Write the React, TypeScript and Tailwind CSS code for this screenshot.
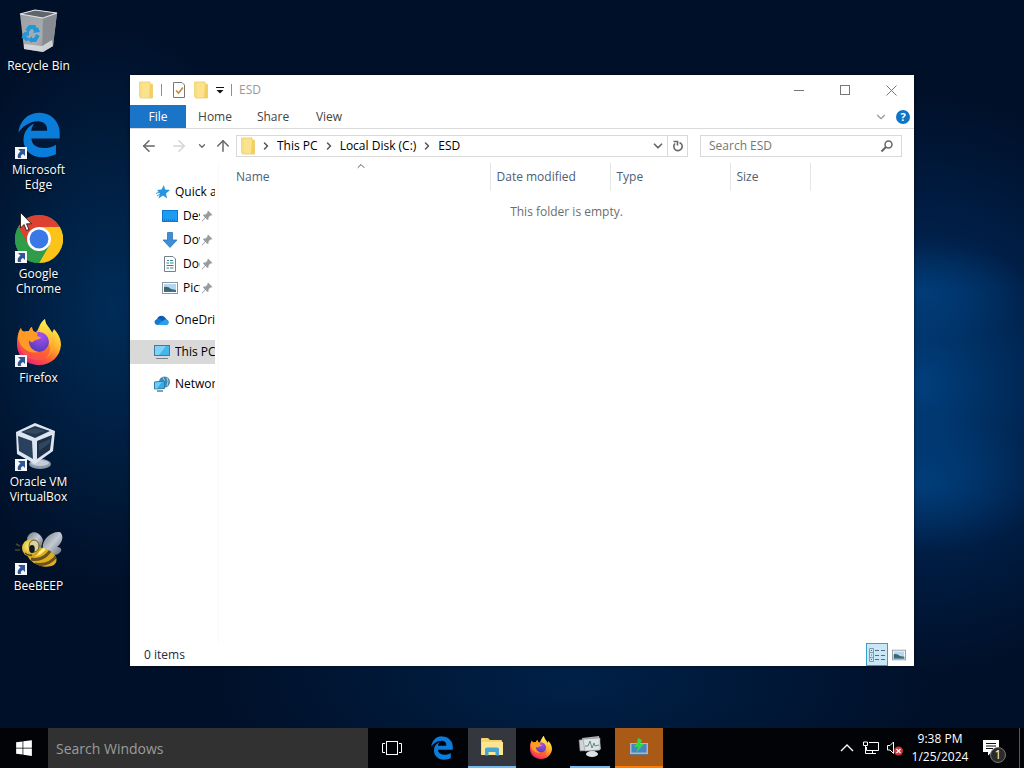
import React from "react";
import { FaEdgeLegacy, FaWindows } from "react-icons/fa6";
import {
  ArrowLeft,
  ArrowRight,
  ArrowUp,
  ChevronDown,
  ChevronRight,
  ChevronUp,
} from "lucide-react";

type IconProps = { className?: string };

function RecycleBinIcon({ className }: IconProps) {
  return (
    <svg viewBox="0 0 48 48" className={className} aria-hidden="true">
      <defs>
        <linearGradient id="binSide" x1="0" y1="0" x2="1" y2="1">
          <stop offset="0" stopColor="#9aa0a6" />
          <stop offset="0.6" stopColor="#a9adb1" />
          <stop offset="1" stopColor="#7f858b" />
        </linearGradient>
      </defs>
      <path d="M5 7 L20 3 L42 6 L38 39 L28 45 L9 42 Z" fill="url(#binSide)" />
      <path d="M28 11 L42 6 L38 39 L27 45 Z" fill="#878c92" />
      <path d="M5 7 L20 3 L42 6 L28 11 Z" fill="#5f656b" stroke="#e3e6e8" strokeWidth="1.2" />
      <path d="M9 37 L27 39 L37 33 L38 39 L28 45 L9 42 Z" fill="#dfe1e3" opacity="0.8" />
      <g fill="none" stroke="#2196d8" strokeWidth="4">
        <path d="M12 24 L15 20 L19 20 L21 24" />
        <path d="M23 28 L20 33 L16 33" />
        <path d="M13 33 L9 30 L11 26" />
      </g>
      <path d="M18 26 L25 25 L23 20 Z M17 29 L17 36 L13 33 Z M8 27 L14 23 L14 29 Z" fill="#2196d8" />
    </svg>
  );
}

function ChromeIcon({ className }: IconProps) {
  return (
    <svg viewBox="0 0 48 48" className={className} aria-hidden="true">
      <circle cx="24" cy="24" r="24" fill="#2e9c48" />
      <path d="M3.2 12 A24 24 0 0 1 44.8 12 L24 12 L13.6 30 Z" fill="#dd4132" />
      <path d="M44.8 12 A24 24 0 0 1 24 48 L34.4 30 L24 12 Z" fill="#fcc419" />
      <path d="M3.2 12 A24 24 0 0 0 24 48 L34.4 30 L13.6 30 Z" fill="#2e9c48" />
      <circle cx="24" cy="24" r="12" fill="#fff" />
      <circle cx="24" cy="24" r="9.4" fill="#3b78e7" />
    </svg>
  );
}

function FirefoxIcon({ className }: IconProps) {
  return (
    <svg viewBox="0 0 48 48" className={className} aria-hidden="true">
      <defs>
        <linearGradient id="foxBody" x1="0.85" y1="0.1" x2="0.2" y2="0.95">
          <stop offset="0" stopColor="#fff04a" />
          <stop offset="0.35" stopColor="#ffb52e" />
          <stop offset="0.65" stopColor="#ff5a36" />
          <stop offset="1" stopColor="#e8207a" />
        </linearGradient>
        <linearGradient id="foxTail" x1="0.5" y1="0" x2="0.5" y2="1">
          <stop offset="0" stopColor="#fff24f" />
          <stop offset="1" stopColor="#ff8d1e" />
        </linearGradient>
        <radialGradient id="foxGlobe" cx="0.6" cy="0.2" r="0.9">
          <stop offset="0" stopColor="#a84ef0" />
          <stop offset="1" stopColor="#4a3bb5" />
        </radialGradient>
      </defs>
      <path
        d="M6 9 C6 11 7 13 8 14 C10 12 12 12 14 12 C15 10 15 9 17 8 C17 11 19 13 21 13 C24 11 24 4 30 0 C30 6 35 8 37 14 L39 10 C44 15 46 21 46 26 C45 38 36 46 24 46 C11 46 2 37 2 25 C2 18 3 13 6 9 Z"
        fill="url(#foxBody)"
      />
      <path d="M30 0 C30 8 37 10 39 18 C42 28 37 36 31 39 C38 32 35 20 28 16 C22 13 25 4 30 0 Z" fill="url(#foxTail)" />
      <circle cx="24" cy="23" r="10" fill="url(#foxGlobe)" />
      <path
        d="M6 9 C7 13 9 13 14 12 C15 10 15 9 17 8 C17 12 20 14 23 14 C21 16 23 18 26 18 C25 21 20 20 18 23 C15 24 14 21 14 21 C13 28 18 32 24 33 C15 36 6 30 3 20 C3 15 4 12 6 9 Z"
        fill="#ff9b25"
      />
      <path d="M3 20 C6 31 16 36 24 33 C31 33 34 29 34 25 C37 33 32 41 24 41 C13 42 4 34 3 20 Z" fill="#ff5a3c" opacity="0.65" />
    </svg>
  );
}

function VirtualBoxIcon({ className }: IconProps) {
  return (
    <svg viewBox="0 0 48 48" className={className} aria-hidden="true">
      <ellipse cx="25" cy="41" rx="11" ry="5" fill="#8d98ab" />
      <ellipse cx="25" cy="40" rx="9" ry="3" fill="#c4ccd8" />
      <path d="M1 9 L20 0 L40 8 L38 28 L20 41 L2 31 Z" fill="#dde5f1" />
      <path d="M6 9 L20 3 L35 8 L20 15 Z" fill="#20364f" />
      <path d="M3 13 L17 18 L18 36 L4 28 Z" fill="#2a415d" />
      <path d="M22 18 L37 12 L35 27 L22 36 Z" fill="#1c3049" />
      <path d="M8 9 L20 5 L30 8 L20 11 Z" fill="#33495f" />
      <path d="M24 21 L35 16 L35 20 L24 28 Z" fill="#31475f" />
    </svg>
  );
}

function BeeIcon({ className }: IconProps) {
  return (
    <svg viewBox="0 0 48 48" className={className} aria-hidden="true">
      <defs>
        <linearGradient id="beeWing" x1="0" y1="0" x2="1" y2="1">
          <stop offset="0" stopColor="#6f7680" />
          <stop offset="0.5" stopColor="#c3cad2" />
          <stop offset="1" stopColor="#646c77" />
        </linearGradient>
        <radialGradient id="beeHead" cx="0.4" cy="0.4" r="0.7">
          <stop offset="0" stopColor="#fff27a" />
          <stop offset="1" stopColor="#c08f06" />
        </radialGradient>
        <clipPath id="beeBody">
          <ellipse cx="27" cy="30" rx="15" ry="9" transform="rotate(18 27 30)" />
        </clipPath>
      </defs>
      <path d="M12 12 C14 3 24 3 28 13 L26 21 L16 17 Z" fill="url(#beeWing)" />
      <path d="M28 22 C26 15 34 4 45 5 C49 9 48 15 42 20 C48 20 48 26 40 28 Z" fill="url(#beeWing)" />
      <g clipPath="url(#beeBody)">
        <rect x="8" y="14" width="38" height="32" fill="#dcb01c" />
        <path d="M16 32 Q30 35 38 19 M20 37 Q34 40 43 27" fill="none" stroke="#6b5020" strokeWidth="3" />
        <path d="M14 27 Q25 30 31 19" fill="none" stroke="#fff08a" strokeWidth="3" />
      </g>
      <circle cx="16" cy="21" r="9" fill="url(#beeHead)" />
      <ellipse cx="19" cy="19" rx="5" ry="6" fill="#d6d2a4" stroke="#665a1e" />
      <ellipse cx="17" cy="22" rx="2.800" ry="4" fill="#14171a" />
      <path d="M1 17 L5 19 M0 23 L5 23 M10 26 Q13 29 17 28" fill="none" stroke="#4a4630" strokeWidth="1.400" />
    </svg>
  );
}

function ShortcutArrow() {
  return (
    <svg viewBox="0 0 12 12" className="absolute bottom-0 left-0 h-3 w-3" aria-hidden="true">
      <rect width="12" height="12" fill="#f4f6f9" />
      <path d="M3 2 H10 V9 L8 7 C6 8 5.500 9.500 6 11 H3 C2 8 3.500 6 5.500 4.500 Z" fill="#2f5596" />
    </svg>
  );
}

function FolderIcon({ className }: IconProps) {
  return (
    <svg viewBox="0 0 16 18" className={className} aria-hidden="true">
      <path d="M1.500 1 H12 V3 L14.500 3.500 V17 H2.500 L1.500 15 Z" fill="#fbe38d" stroke="#e9cb6b" strokeWidth="0.800" />
      <path d="M12 3 L14.500 3.500 V17 H11 Z" fill="#f2cf62" />
      <path d="M1.500 1 L4 2 V17 L1.500 15 Z" fill="#f8dd82" />
    </svg>
  );
}

function StarIcon() {
  return (
    <svg viewBox="0 0 16 16" className="h-4 w-4" aria-hidden="true">
      <path d="M10 1 L11 5.500 L16 6 L12 9.500 L13 14.500 L9 11.500 L4.500 14.500 L6 9.500 L3 6 L7.500 5.500 Z" fill="#2795dd" />
      <path d="M2 9.500 L6 8 M3 12 L6 10" stroke="#2795dd" />
    </svg>
  );
}

function DesktopFolderIcon() {
  return (
    <svg viewBox="0 0 16 16" className="h-4 w-4" aria-hidden="true">
      <rect x="0.500" y="2.500" width="15" height="11" fill="#1e9bf5" stroke="#1277cc" />
      <path d="M2 12 H14" stroke="#0a5ea8" strokeDasharray="1 1" />
    </svg>
  );
}

function DownloadsIcon() {
  return (
    <svg viewBox="0 0 16 16" className="h-4 w-4" aria-hidden="true">
      <path d="M5.500 0.500 H10.500 V8 H15 L8 15.500 L1 8 H5.500 Z" fill="#3b8fd9" stroke="#2d74b8" strokeWidth="0.800" />
    </svg>
  );
}

function DocumentsIcon() {
  return (
    <svg viewBox="0 0 16 16" className="h-4 w-4" aria-hidden="true">
      <path d="M2.500 0.500 H11 L13.500 3 V15.500 H2.500 Z" fill="#fff" stroke="#75828c" />
      <path d="M5 4.500 H7 M8 4.500 H11 M4.500 7 H7 M8 7 H11.500 M4.500 9.500 H11.500 M4.500 12 H7 M8 12 H11.500" stroke="#2c8794" strokeWidth="1.200" />
    </svg>
  );
}

function PictureIcon({ className }: IconProps) {
  return (
    <svg viewBox="0 0 16 16" className={className} aria-hidden="true">
      <rect x="0.500" y="2.500" width="15" height="11" fill="#fff" stroke="#8c969e" />
      <rect x="2" y="4" width="12" height="8" fill="#b5d6f1" />
      <path d="M2 7 Q6 6 9 9 L14 10 V12 H2 Z" fill="#3c6568" />
      <path d="M2 10.500 H14 V12 H2 Z" fill="#3673a8" />
    </svg>
  );
}

function OneDriveIcon() {
  return (
    <svg viewBox="0 0 16 16" className="h-4 w-4" aria-hidden="true">
      <path d="M3 8 A4.500 4.500 0 0 1 11 5.500 L14 9 L8 12 L2 10 Z" fill="#0a5cb0" />
      <path d="M3 13 A3 3 0 0 1 2.500 7.200 Q5 6 7.500 8 L13 13 Z" fill="#1479cf" />
      <path d="M3 13 L10 8 Q11 6.800 12.500 7.500 A2.900 2.900 0 0 1 13.200 13 Z" fill="#2aa0ea" />
    </svg>
  );
}

function ThisPCIcon() {
  return (
    <svg viewBox="0 0 16 16" className="h-4 w-4" aria-hidden="true">
      <rect x="0.500" y="1.500" width="15" height="10" fill="#46b5ea" stroke="#3d7ba3" />
      <path d="M1 2 H12 L5 11 H1 Z" fill="#7fd2f6" />
      <path d="M2 14.500 H14" stroke="#75838d" />
    </svg>
  );
}

function NetworkIcon() {
  return (
    <svg viewBox="0 0 16 16" className="h-4 w-4" aria-hidden="true">
      <circle cx="10.500" cy="6" r="5.500" fill="#4288b5" />
      <path d="M9 1.500 Q12 4 9 8 M13 2 Q15 5 13 10" stroke="#a6d3ea" fill="none" />
      <path d="M0.500 6 L10.500 5 V12.500 L0.500 13 Z" fill="#38ace2" stroke="#2a7cae" />
      <path d="M1 6.500 L8 6 L3 12.500 H1 Z" fill="#73cdf2" />
      <path d="M3 15 H9" stroke="#5c7f94" strokeWidth="1.500" />
    </svg>
  );
}

function PinIcon() {
  return (
    <svg viewBox="0 0 12 12" className="h-3 w-3 shrink-0" aria-hidden="true">
      <path d="M7 0.500 L11.500 5 L10.500 5.500 L9.500 5.500 L7.500 7.500 L7.500 9.500 L6.500 10 L4.500 8 L1 11.500 L0.500 11 L4 7.500 L2 5.500 L2.500 4.500 L4.500 4.500 L6.500 2.500 L6.500 1.500 Z" fill="#979ca1" />
    </svg>
  );
}

function RefreshIcon() {
  return (
    <svg viewBox="0 0 12 12" className="h-3 w-3" fill="none" stroke="currentColor" aria-hidden="true">
      <path d="M7.500 2.500 A4.200 4.200 0 1 1 3 3.500" strokeWidth="1.600" />
      <path d="M1.500 1.500 H5.500 V5.500" strokeWidth="1.600" />
    </svg>
  );
}

function TaskViewIcon() {
  return (
    <svg viewBox="0 0 20 14" className="h-[14px] w-5" fill="none" stroke="#fff" aria-hidden="true">
      <rect x="4.500" y="0.500" width="11" height="13" />
      <path d="M3 2.500 H0.500 V11.500 H3 M17 2.500 H19.500 V11.500 H17" />
    </svg>
  );
}

function ExplorerIcon() {
  return (
    <svg viewBox="0 0 22 18" className="h-[18px] w-[22px]" aria-hidden="true">
      <path d="M0 1 Q0 0 1 0 H7 L9 2 H20 Q21 2 21 3 V17 H0 Z" fill="#f5d46c" />
      <path d="M1 4 H22 V17 H1 Z" fill="#fde691" />
      <path d="M4 17.500 V11.500 Q4 9.500 6 9.500 H16 Q18 9.500 18 11.500 V17.500 H14.500 V14 H7.500 V17.500 Z" fill="#43a5d8" />
    </svg>
  );
}

function MonitorIcon() {
  return (
    <svg viewBox="0 0 24 22" className="h-[22px] w-6" aria-hidden="true">
      <path d="M4 2 L21 0 L23 13 L5 15 Z" fill="#aeb2b4" />
      <path d="M1 4 L19 2 L21 14 L2 15 Z" fill="#d2d5d6" stroke="#74797c" strokeWidth="0.600" />
      <path d="M5 3 L22 2 L22 14 L7 15 Z" fill="#dfe3e3" stroke="#92979a" strokeWidth="0.600" />
      <path d="M7 10 L10 10 L12 5 L14 12 L16 7 L17 10 L21 9" fill="none" stroke="#5d8b90" />
      <path d="M12 15 L17 15 L18 18 L11 18 Z" fill="#a4a8aa" />
      <ellipse cx="14" cy="18" rx="6" ry="3" fill="#dfe2e3" />
    </svg>
  );
}

function InstallerIcon() {
  return (
    <svg viewBox="0 0 20 18" className="h-[18px] w-5" aria-hidden="true">
      <rect x="1" y="5" width="18" height="11" fill="#a9b7c6" />
      <rect x="2.500" y="6" width="15" height="8.500" fill="#4784c6" />
      <path d="M9 0 L13 2 L11 6 H15 L7 15 L9 9 H5 L8 5 Z" fill="#35d646" />
      <path d="M1 16 H19 V17 H1 Z" fill="#697887" />
    </svg>
  );
}

function NetworkTrayIcon() {
  return (
    <svg viewBox="0 0 18 14" className="h-[14px] w-[18px]" fill="none" stroke="#fff" aria-hidden="true">
      <path d="M7 1.500 H16.500 V9.500 H4.500 V6 M10.500 9.500 V12.500 M7 12.500 H14" />
      <path d="M1.500 1 V4.500 H5.500 V1 Z M3.500 4.500 V12.500 H7" />
    </svg>
  );
}

function SoundMutedIcon() {
  return (
    <svg viewBox="0 0 18 16" className="h-4 w-[18px]" aria-hidden="true">
      <path d="M1.500 5.500 H4 L7.500 2 V13.500 L4 10 H1.500 Z" fill="none" stroke="#fff" />
      <circle cx="12.500" cy="11" r="4.500" fill="#cf3338" />
      <path d="M10.500 9 L14.500 13 M14.500 9 L10.500 13" stroke="#fff" strokeWidth="1.200" />
    </svg>
  );
}

function NotificationIcon() {
  return (
    <svg viewBox="0 0 16 16" className="h-4 w-4" aria-hidden="true">
      <path d="M0 0 H16 V12 H9 L5 15.500 V12 H0 Z" fill="#fff" />
      <path d="M3 3.500 H13 M3 6 H13 M3 8.500 H10" stroke="#111" />
    </svg>
  );
}

const shortcuts = [
  { name: "Recycle Bin", icon: <RecycleBinIcon className="h-12 w-12" />, linked: false },
  { name: "Microsoft Edge", icon: <FaEdgeLegacy className="h-[46px] w-[46px] text-[#0a7ddb]" />, linked: true },
  { name: "Google Chrome", icon: <ChromeIcon className="h-12 w-12" />, linked: true },
  { name: "Firefox", icon: <FirefoxIcon className="h-12 w-12" />, linked: true },
  { name: "Oracle VM VirtualBox", icon: <VirtualBoxIcon className="h-12 w-12" />, linked: true },
  { name: "BeeBEEP", icon: <BeeIcon className="h-12 w-12" />, linked: true },
];

const quickAccess = [
  { name: "Desktop", icon: <DesktopFolderIcon /> },
  { name: "Downloads", icon: <DownloadsIcon /> },
  { name: "Documents", icon: <DocumentsIcon /> },
  { name: "Pictures", icon: <PictureIcon className="h-4 w-4" /> },
];

const places = [
  { name: "OneDrive", icon: <OneDriveIcon />, selected: false },
  { name: "This PC", icon: <ThisPCIcon />, selected: true },
  { name: "Network", icon: <NetworkIcon />, selected: false },
];

function DesktopShortcuts() {
  return (
    <nav className="w-[77px] shrink-0 pt-[7px]" aria-label="Desktop">
      {shortcuts.map((item) => (
        <a key={item.name} href="#" className="flex h-[104px] flex-col items-center text-center text-white">
          <span className="relative flex h-12 w-12 items-center justify-center">
            {item.icon}
            {item.linked && <ShortcutArrow />}
          </span>
          <span className="mt-[3px] w-[66px] leading-[15px] [text-shadow:0_1px_2px_#000]">{item.name}</span>
        </a>
      ))}
    </nav>
  );
}

function TitleBar() {
  return (
    <header className="flex h-[30px] items-center">
      <FolderIcon className="ml-2 h-[18px] w-4" />
      <span className="ml-[7px] h-3 w-px bg-[#8f8f8f]" />
      <button aria-label="Properties" className="ml-[9px]">
        <svg viewBox="0 0 16 16" className="h-4 w-4" aria-hidden="true">
          <path d="M2.500 0.500 H11 L13.500 3 V15.500 H2.500 Z" fill="#fff" stroke="#777" />
          <path d="M5 8.500 L7.500 11 L12 5.500" fill="none" stroke="#c58a3e" strokeWidth="1.600" />
        </svg>
      </button>
      <button aria-label="New folder" className="ml-[6px]">
        <FolderIcon className="h-[18px] w-4" />
      </button>
      <button aria-label="Customize Quick Access Toolbar" className="ml-[7px]">
        <svg viewBox="0 0 8 8" className="h-2 w-2" aria-hidden="true">
          <path d="M0 1.500 H8" stroke="#111" />
          <path d="M0.500 4 H7.500 L4 7.500 Z" fill="#111" />
        </svg>
      </button>
      <span className="ml-[7px] h-3 w-px bg-[#8f8f8f]" />
      <h1 className="ml-[7px] flex-1 text-[#999]">ESD</h1>
      <div className="flex h-full text-[#777]">
        <button aria-label="Minimize" className="flex w-[46px] items-center justify-center">
          <span className="h-px w-[10px] bg-[#777]" />
        </button>
        <button aria-label="Maximize" className="flex w-[46px] items-center justify-center">
          <span className="h-[10px] w-[10px] border border-[#777]" />
        </button>
        <button aria-label="Close" className="flex w-[46px] items-center justify-center">
          <svg viewBox="0 0 11 11" className="h-[11px] w-[11px]" stroke="currentColor" aria-hidden="true">
            <path d="M0.500 0.500 L10.500 10.500 M10.500 0.500 L0.500 10.500" />
          </svg>
        </button>
      </div>
    </header>
  );
}

function RibbonTabs() {
  return (
    <div className="flex h-6 items-stretch border-b border-[#dadbdc] text-[#444]">
      <button className="w-14 bg-[#1a75c9] text-white">File</button>
      <button className="w-[58px]">Home</button>
      <button className="w-[58px]">Share</button>
      <button className="w-[54px]">View</button>
      <div className="ml-auto flex items-center gap-2 pr-1">
        <button aria-label="Expand the Ribbon">
          <ChevronDown className="h-[14px] w-[14px] text-[#999]" />
        </button>
        <button aria-label="Help" className="h-[14px] w-[14px] rounded-full bg-[#0f74c8] text-[11px] leading-[14px] font-bold text-white">
          ?
        </button>
      </div>
    </div>
  );
}

function AddressBar() {
  return (
    <div className="flex h-[34px] items-center pr-3 pl-1 text-[#666]">
      <button aria-label="Back" className="flex w-[30px] justify-center">
        <ArrowLeft className="h-[18px] w-[18px]" />
      </button>
      <button aria-label="Forward" disabled className="flex w-[30px] justify-center text-[#d4d4d4]">
        <ArrowRight className="h-[18px] w-[18px]" />
      </button>
      <button aria-label="Recent locations" className="flex w-4 justify-center">
        <ChevronDown className="h-[10px] w-[10px]" strokeWidth={3} />
      </button>
      <button aria-label="Up" className="flex w-[26px] justify-center">
        <ArrowUp className="h-[18px] w-[18px]" />
      </button>
      <div className="flex h-[22px] flex-1 items-center border border-[#d9d9d9] pl-[3px]">
        <FolderIcon className="h-[18px] w-4" />
        <ol className="flex flex-1 items-center text-black">
          {["This PC", "Local Disk (C:)", "ESD"].map((part) => (
            <li key={part} className="flex items-center">
              <ChevronRight className="mx-1 h-3 w-3 text-[#555]" strokeWidth={3} />
              <a href="#" className="px-px">{part}</a>
            </li>
          ))}
        </ol>
        <button aria-label="Previous locations" className="flex w-[18px] justify-center">
          <ChevronDown className="h-[14px] w-[14px]" strokeWidth={3} />
        </button>
        <button aria-label="Refresh" className="flex h-full w-5 items-center justify-center border-l border-[#d9d9d9]">
          <RefreshIcon />
        </button>
      </div>
      <div className="ml-3 flex h-[22px] w-[202px] items-center border border-[#d9d9d9] pr-2 pl-2">
        <input aria-label="Search ESD" placeholder="Search ESD" className="min-w-0 flex-1 outline-none placeholder:text-[#767676]" />
        <svg viewBox="0 0 12 12" className="h-3 w-3" fill="none" stroke="#666" aria-hidden="true">
          <circle cx="7.500" cy="4.500" r="3.500" strokeWidth="1.500" />
          <path d="M5 7 L0.500 11.500" strokeWidth="2" />
        </svg>
      </div>
    </div>
  );
}

function Sidebar() {
  return (
    <nav className="w-[85px] shrink-0 overflow-hidden pt-[17px] whitespace-nowrap text-black" aria-label="Folders">
      <a href="#" className="flex h-6 items-center pl-6">
        <StarIcon />
        <span className="ml-[5px] w-10 overflow-hidden">Quick access</span>
      </a>
      {quickAccess.map((item) => (
        <a key={item.name} href="#" className="flex h-6 items-center pl-8">
          {item.icon}
          <span className="mr-px ml-[5px] w-[17px] overflow-hidden">{item.name}</span>
          <PinIcon />
        </a>
      ))}
      {places.map((item) => (
        <a
          key={item.name}
          href="#"
          className={`mt-2 flex h-6 items-center pl-6 ${item.selected ? "bg-[#d9d9d9]" : ""}`}
        >
          {item.icon}
          <span className="ml-[5px] w-10 overflow-hidden">{item.name}</span>
        </a>
      ))}
    </nav>
  );
}

function FileList() {
  return (
    <main className="flex-1 border-l border-[#f9f9f9]">
      <table className="ml-[11px] table-fixed text-left text-[#4c607a]">
        <thead>
          <tr className="h-7">
            <th aria-sort="ascending" className="relative w-[260px] border-r border-[#e5e5e5] pl-[6px] font-normal">
              Name
              <ChevronUp className="absolute top-[-3px] left-[125px] h-3 w-3 text-[#555]" />
            </th>
            <th className="w-[120px] border-r border-[#e5e5e5] pl-[6px] font-normal">Date modified</th>
            <th className="w-[120px] border-r border-[#e5e5e5] pl-[6px] font-normal">Type</th>
            <th className="w-[80px] border-r border-[#e5e5e5] pl-[6px] font-normal">Size</th>
          </tr>
        </thead>
      </table>
      <p className="mt-3 text-center leading-[18px] text-[#6d6d6d]">This folder is empty.</p>
    </main>
  );
}

function StatusBar() {
  return (
    <footer className="flex h-[23px] items-center pr-2 pl-[14px] text-[#1e2c45]">
      <span className="flex-1">0 items</span>
      <button aria-label="Details view" className="flex h-[23px] w-[22px] items-center justify-center border border-[#3aa0c8] bg-[#c8e8f7]">
        <svg viewBox="0 0 16 14" className="h-[14px] w-4" fill="none" stroke="#5b6b77" aria-hidden="true">
          <path d="M0.500 0.500 H4.500 V13.500 H0.500 Z M0.500 4.500 H4.500 M0.500 9.500 H4.500" stroke="#8797a3" />
          <path d="M2 2.500 H3 M2 7 H3 M2 11.500 H3 M6 2.500 H10 M12 2.500 H16 M6 7.500 H10 M12 7.500 H16 M6 11.500 H10 M12 11.500 H16" />
        </svg>
      </button>
      <button aria-label="Large icons view" className="ml-1">
        <PictureIcon className="h-[14px] w-[14px]" />
      </button>
    </footer>
  );
}

function ExplorerWindow() {
  return (
    <section className="mt-[75px] mr-[110px] mb-[62px] ml-[53px] flex min-w-0 flex-1 flex-col bg-white shadow-[0_0_3px_#0008]">
      <TitleBar />
      <RibbonTabs />
      <AddressBar />
      <div className="flex flex-1 gap-[3px]">
        <Sidebar />
        <FileList />
      </div>
      <StatusBar />
    </section>
  );
}

function Taskbar() {
  return (
    <footer className="flex h-10 items-stretch bg-[#020306] text-white">
      <button aria-label="Start" className="flex w-12 items-center justify-center">
        <FaWindows className="h-[18px] w-[18px]" />
      </button>
      <input
        aria-label="Search Windows"
        placeholder="Search Windows"
        className="w-80 bg-[#313131] px-2 text-[14px] outline-none placeholder:text-[#9b9b9b]"
      />
      <div className="flex gap-px">
        <button aria-label="Task View" className="mr-px flex w-12 items-center justify-center">
          <TaskViewIcon />
        </button>
        <button aria-label="Microsoft Edge" className="mr-px flex w-12 items-center justify-center">
          <FaEdgeLegacy className="h-6 w-6 text-[#0a7ddb]" />
        </button>
        <button aria-label="File Explorer" className="flex w-12 items-center justify-center border-b-2 border-[#76b9ed] bg-[#35373f]">
          <ExplorerIcon />
        </button>
        <button aria-label="Firefox" className="flex w-12 items-center justify-center">
          <FirefoxIcon className="h-6 w-6" />
        </button>
        <button aria-label="System monitor" className="mx-1 flex w-10 items-center justify-center border-b-2 border-[#76b9ed]">
          <MonitorIcon />
        </button>
        <button aria-label="Installer" className="flex w-12 items-center justify-center border-b-2 border-[#ff7b00] bg-[#aa5a17]">
          <InstallerIcon />
        </button>
      </div>
      <div className="ml-auto flex items-center">
        <button aria-label="Show hidden icons">
          <svg viewBox="0 0 14 8" className="h-2 w-[14px]" fill="none" stroke="#fff" aria-hidden="true">
            <path d="M1 7 L7 1 L13 7" strokeWidth="1.400" />
          </svg>
        </button>
        <button aria-label="Network" className="ml-2">
          <NetworkTrayIcon />
        </button>
        <button aria-label="Volume" className="ml-[6px]">
          <SoundMutedIcon />
        </button>
        <time className="ml-[7px] w-[58px] text-center leading-[18px]">
          9:38 PM
          <br />
          1/25/2024
        </time>
        <button aria-label="Notifications" className="relative mr-5 ml-[14px]">
          <NotificationIcon />
          <span className="absolute top-[7px] left-[7px] h-4 w-4 rounded-full border border-[#777] bg-[#2b2b2b] leading-[14px]">
            1
          </span>
        </button>
        <button aria-label="Show desktop" className="h-10 w-[5px] border-l border-[#5a5a5a]" />
      </div>
    </footer>
  );
}

export default function App() {
  return (
    <div className="relative flex min-h-screen flex-col bg-[#001029] bg-[radial-gradient(ellipse_110px_50px_at_90%_38%,#00509877,transparent),radial-gradient(ellipse_130px_70px_at_90%_63%,#004e9488,transparent),radial-gradient(ellipse_260px_290px_at_90%_50%,#003f7c,#00285a99_55%,transparent),radial-gradient(ellipse_170px_280px_at_11%_40%,#002c58,transparent),radial-gradient(ellipse_360px_130px_at_56%_89%,#002148,transparent)] font-['Open_Sans','Noto_Sans',sans-serif] text-[12px]">
      <div className="flex flex-1">
        <DesktopShortcuts />
        <ExplorerWindow />
      </div>
      <Taskbar />
      <svg viewBox="0 0 12 19" className="absolute top-[212px] left-[20px] h-[19px] w-3" aria-hidden="true">
        <path d="M0.500 0.500 V16 L4 12.500 L6.500 18.500 L9 17.500 L6.500 11.800 H11.500 Z" fill="#fff" stroke="#111" strokeWidth="0.800" />
      </svg>
    </div>
  );
}
